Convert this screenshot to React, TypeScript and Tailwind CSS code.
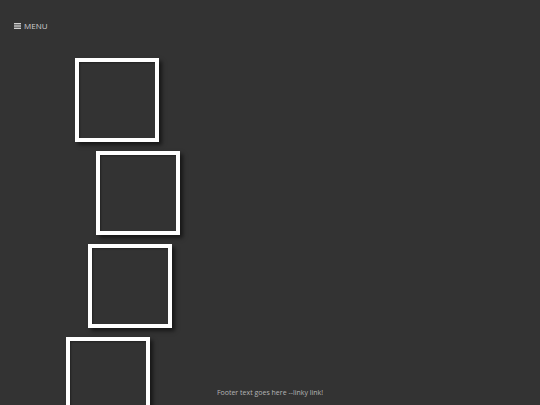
export default function App() {
  const boxes = ["ml-[75px]", "ml-[96px]", "ml-[88px]", "ml-[66px]"]
  return (
    <div className="relative h-[405px] overflow-hidden bg-[#333333] font-['Open_Sans',sans-serif]">
      <header className="flex items-center gap-[3px] px-[14px] pt-[21px] text-[8px] leading-[10px] text-[#cfcfcf]">
        <svg width="7" height="6" viewBox="0 0 7 6" fill="#d0d0d0">
          <rect x="0" y="0" width="7" height="1.4" />
          <rect x="0" y="2.3" width="7" height="1.4" />
          <rect x="0" y="4.6" width="7" height="1.4" />
        </svg>
        <span>MENU</span>
      </header>
      <main className="mt-[27px] flex flex-col gap-[9px]">
        {boxes.map((m, i) => (
          <div
            key={i}
            className={`${m} h-[84px] w-[84px] border-4 border-white shadow-[3px_3px_4px_rgba(0,0,0,0.55),inset_1px_1px_2px_rgba(0,0,0,0.35)]`}
          />
        ))}
      </main>
      <footer className="absolute bottom-[7px] left-0 right-0 text-center text-[7px] text-[#b5b5b5]">
        Footer text goes here --linky link!
      </footer>
    </div>
  )
}
